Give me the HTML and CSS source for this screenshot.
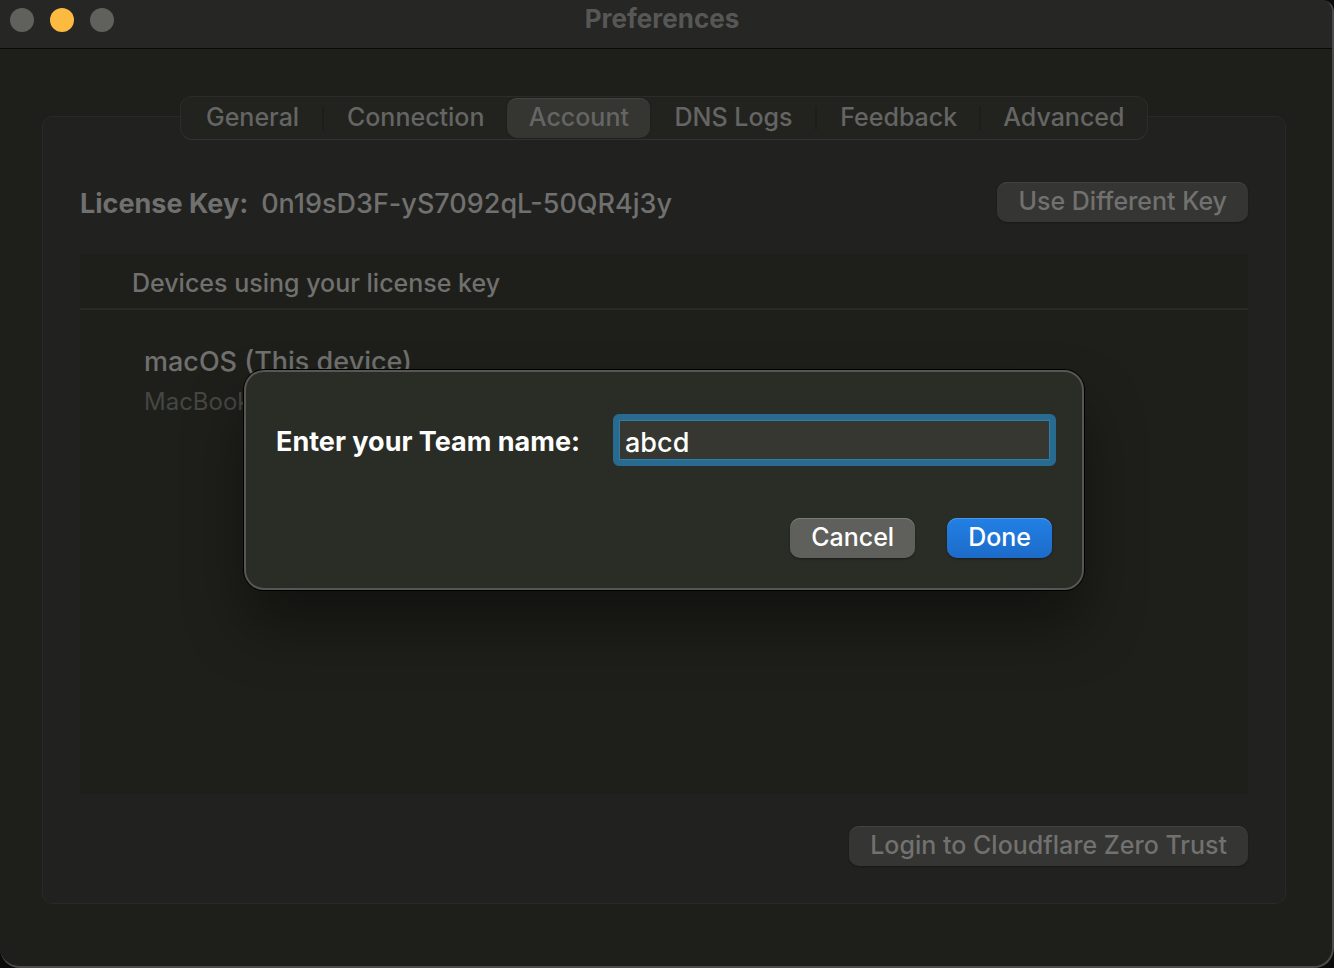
FILE: index.html
```html
<!DOCTYPE html>
<html lang="en">
<head>
<meta charset="utf-8">
<title>Preferences</title>
<link rel="stylesheet" href="styles.css">
</head>
<body>
<div class="window">
  <header class="titlebar">
    <div class="lights">
      <button class="light" type="button" aria-label="Close"></button>
      <button class="light light-minimize" type="button" aria-label="Minimize"></button>
      <button class="light" type="button" aria-label="Zoom"></button>
    </div>
    <h1 class="title">Preferences</h1>
  </header>
  <main class="content">
    <nav class="tabs" role="tablist">
      <button class="tab" type="button" role="tab">General</button>
      <button class="tab no-divider" type="button" role="tab">Connection</button>
      <button class="tab selected" type="button" role="tab" aria-selected="true">Account</button>
      <button class="tab" type="button" role="tab">DNS Logs</button>
      <button class="tab" type="button" role="tab">Feedback</button>
      <button class="tab no-divider" type="button" role="tab">Advanced</button>
    </nav>
    <section class="panel">
      <div class="license">
        <p class="license-text"><strong>License Key:</strong><span>0n19sD3F-yS7092qL-50QR4j3y</span></p>
        <button class="button muted" type="button">Use Different Key</button>
      </div>
      <section class="devices">
        <h2 class="devices-title">Devices using your license key</h2>
        <div class="device">
          <p class="device-name">macOS (This device)</p>
          <p class="device-model">MacBook</p>
        </div>
      </section>
      <div class="footer">
        <button class="button muted" type="button">Login to Cloudflare Zero Trust</button>
      </div>
      <form class="dialog" role="dialog" aria-modal="true">
        <div class="field">
          <label for="team">Enter your Team name:</label>
          <input id="team" class="input" type="text" value="abcd">
        </div>
        <div class="actions">
          <button class="button cancel" type="button">Cancel</button>
          <button class="button done" type="button">Done</button>
        </div>
      </form>
    </section>
  </main>
</div>
</body>
</html>
```
FILE: styles.css
```css
* { box-sizing: border-box; }

body {
  margin: 0;
  background: #0b0b0c;
  font-family: Inter, "Liberation Sans", sans-serif;
  font-size: 25px;
  font-weight: 500;
  line-height: 32px;
  color: #70706f;
}

h1, h2, p { margin: 0; font-size: inherit; font-weight: inherit; }

button, input { font: inherit; color: inherit; margin: 0; }

.window {
  display: flex;
  flex-direction: column;
  min-height: 100vh;
  overflow: hidden;
  background: #1e1f1a;
  border: solid #4b4b4b;
  border-width: 0 2px 2px 0;
  border-radius: 0 12px 20px 20px;
}

.titlebar {
  display: grid;
  grid-template-columns: 1fr auto 1fr;
  height: 49px;
  padding: 0 18px 0 10px;
  background: #262625;
  border-bottom: 1px solid #090909;
}

.lights { display: flex; gap: 16px; padding-top: 8px; }

.light {
  width: 24px;
  height: 24px;
  padding: 0;
  border: 0;
  border-radius: 50%;
  background: #60615c;
}

.light-minimize { background: #fdba40; }

.title { padding-top: 3px; font-size: 26px; font-weight: 700; color: #575756; }

.content {
  flex: 1;
  display: flex;
  flex-direction: column;
  padding: 47px 46px 62px 42px;
}

.tabs {
  z-index: 1;
  display: grid;
  grid-template-columns: 143fr 183fr 143fr 166fr 164fr 166fr;
  align-self: center;
  width: 968px;
  max-width: 100%;
  height: 44px;
  padding: 1px 0;
  background: #22231f;
  border: 1px solid #2c2d2a;
  border-bottom-color: #343532;
  border-radius: 12px;
}

.tab {
  position: relative;
  padding: 0 0 2px;
  border: 0;
  border-radius: 10px;
  background: none;
  color: #656564;
  white-space: nowrap;
}

.tab:not(.selected):not(.no-divider)::after {
  content: "";
  position: absolute;
  right: 0;
  top: 8px;
  width: 2px;
  height: 24px;
  background: #1d1e1b;
}

.tab.selected {
  background: #353532;
  box-shadow: inset 0 1px #424240, 0 0 2px #181816;
}

.panel {
  position: relative;
  flex: 1;
  display: flex;
  flex-direction: column;
  margin-top: -24px;
  padding: 65px 37px 37px;
  background: #21211f;
  border: 1px solid #292a27;
  border-radius: 10px;
}

.license { display: flex; justify-content: space-between; align-items: center; }

.license-text { display: flex; gap: 13px; padding-top: 3px; font-size: 27px; }

.button {
  height: 40px;
  padding: 0 21px 2px;
  border: 0;
  border-radius: 10px;
  white-space: nowrap;
}

.muted { background: #353533; color: #717170; box-shadow: inset 0 1px #424240, 0 1px 2px #191917; }

.devices { flex: 1; margin-top: 32px; background: #1e1f1a; }

.devices-title { padding: 13px 52px 9px; border-bottom: 2px solid #2a2a26; }

.device { padding: 36px 64px; }

.device-name { font-size: 27px; }

.device-model { padding-top: 8px; font-size: 24px; font-weight: 400; color: #464643; }

.footer { display: flex; justify-content: flex-end; margin-top: 32px; }

.dialog {
  position: absolute;
  top: 253px;
  left: 50%;
  width: 840px;
  max-width: 100%;
  transform: translateX(-50%);
  padding: 42px 26px 30px 30px;
  background: #2a2c26;
  border: 2px solid #565752;
  border-radius: 20px;
  box-shadow: 0 0 0 1px #000, 0 36px 60px rgba(0, 0, 0, 0.4);
}

.field {
  display: flex;
  align-items: center;
  gap: 33px;
  color: #fff;
  font-size: 27px;
}

.field label { padding-top: 3px; font-weight: 700; white-space: nowrap; }

.input {
  flex: 1;
  min-width: 0;
  height: 52px;
  padding: 4px 6px 0;
  border: 6px solid #286b91;
  border-radius: 6px;
  outline: 0;
  background: #353730;
  box-shadow: inset 0 0 0 1px #3679a2, inset 0 -1px #5589a9;
}

.actions { display: flex; justify-content: flex-end; gap: 32px; padding: 52px 4px 0 0; color: #fff; }

.cancel { background: #5f605b; box-shadow: inset 0 1px #7b7c78, 0 1px 2px #1c1d19; }

.done {
  background: linear-gradient(#2280e5, #1d6bc9);
  box-shadow: inset 0 1px #4b98ea, 0 1px 2px #1c1d19;
}
```
